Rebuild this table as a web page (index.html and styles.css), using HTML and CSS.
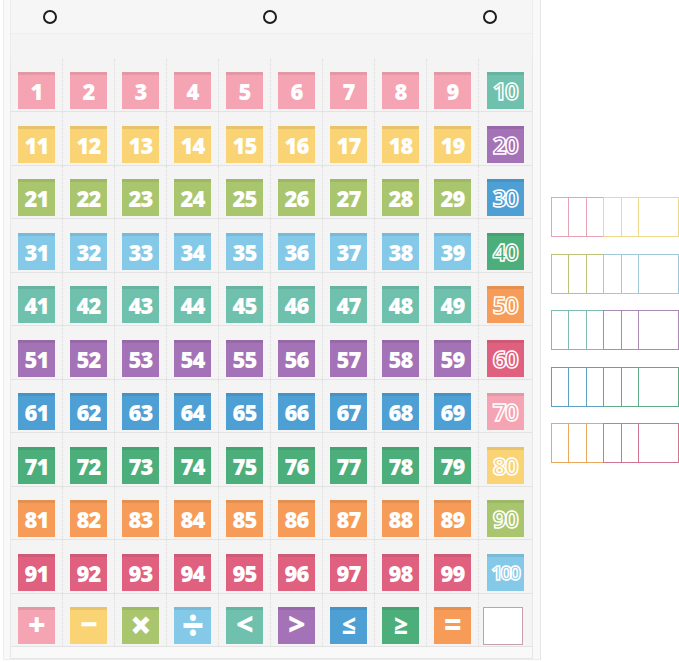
FILE: index.html
```html
<!DOCTYPE html>
<html>
<head>
<meta charset="utf-8">
<link rel="stylesheet" href="styles.css">
</head>
<body>
<div class="page">
  <div class="panel">
    <div class="header">
      <span class="grommet"></span>
      <span class="grommet"></span>
      <span class="grommet"></span>
    </div>
    <div class="grid">
      <div class="row">
        <div class="cell"><span class="card pink">1</span></div>
        <div class="cell"><span class="card pink">2</span></div>
        <div class="cell"><span class="card pink">3</span></div>
        <div class="cell"><span class="card pink">4</span></div>
        <div class="cell"><span class="card pink">5</span></div>
        <div class="cell"><span class="card pink">6</span></div>
        <div class="cell"><span class="card pink">7</span></div>
        <div class="cell"><span class="card pink">8</span></div>
        <div class="cell"><span class="card pink">9</span></div>
        <div class="cell"><span class="card teal outline">10</span></div>
      </div>
      <div class="row">
        <div class="cell"><span class="card yellow">11</span></div>
        <div class="cell"><span class="card yellow">12</span></div>
        <div class="cell"><span class="card yellow">13</span></div>
        <div class="cell"><span class="card yellow">14</span></div>
        <div class="cell"><span class="card yellow">15</span></div>
        <div class="cell"><span class="card yellow">16</span></div>
        <div class="cell"><span class="card yellow">17</span></div>
        <div class="cell"><span class="card yellow">18</span></div>
        <div class="cell"><span class="card yellow">19</span></div>
        <div class="cell"><span class="card purple outline">20</span></div>
      </div>
      <div class="row">
        <div class="cell"><span class="card lime">21</span></div>
        <div class="cell"><span class="card lime">22</span></div>
        <div class="cell"><span class="card lime">23</span></div>
        <div class="cell"><span class="card lime">24</span></div>
        <div class="cell"><span class="card lime">25</span></div>
        <div class="cell"><span class="card lime">26</span></div>
        <div class="cell"><span class="card lime">27</span></div>
        <div class="cell"><span class="card lime">28</span></div>
        <div class="cell"><span class="card lime">29</span></div>
        <div class="cell"><span class="card blue outline">30</span></div>
      </div>
      <div class="row">
        <div class="cell"><span class="card sky">31</span></div>
        <div class="cell"><span class="card sky">32</span></div>
        <div class="cell"><span class="card sky">33</span></div>
        <div class="cell"><span class="card sky">34</span></div>
        <div class="cell"><span class="card sky">35</span></div>
        <div class="cell"><span class="card sky">36</span></div>
        <div class="cell"><span class="card sky">37</span></div>
        <div class="cell"><span class="card sky">38</span></div>
        <div class="cell"><span class="card sky">39</span></div>
        <div class="cell"><span class="card green outline">40</span></div>
      </div>
      <div class="row">
        <div class="cell"><span class="card teal">41</span></div>
        <div class="cell"><span class="card teal">42</span></div>
        <div class="cell"><span class="card teal">43</span></div>
        <div class="cell"><span class="card teal">44</span></div>
        <div class="cell"><span class="card teal">45</span></div>
        <div class="cell"><span class="card teal">46</span></div>
        <div class="cell"><span class="card teal">47</span></div>
        <div class="cell"><span class="card teal">48</span></div>
        <div class="cell"><span class="card teal">49</span></div>
        <div class="cell"><span class="card orange outline">50</span></div>
      </div>
      <div class="row">
        <div class="cell"><span class="card purple">51</span></div>
        <div class="cell"><span class="card purple">52</span></div>
        <div class="cell"><span class="card purple">53</span></div>
        <div class="cell"><span class="card purple">54</span></div>
        <div class="cell"><span class="card purple">55</span></div>
        <div class="cell"><span class="card purple">56</span></div>
        <div class="cell"><span class="card purple">57</span></div>
        <div class="cell"><span class="card purple">58</span></div>
        <div class="cell"><span class="card purple">59</span></div>
        <div class="cell"><span class="card rose outline">60</span></div>
      </div>
      <div class="row">
        <div class="cell"><span class="card blue">61</span></div>
        <div class="cell"><span class="card blue">62</span></div>
        <div class="cell"><span class="card blue">63</span></div>
        <div class="cell"><span class="card blue">64</span></div>
        <div class="cell"><span class="card blue">65</span></div>
        <div class="cell"><span class="card blue">66</span></div>
        <div class="cell"><span class="card blue">67</span></div>
        <div class="cell"><span class="card blue">68</span></div>
        <div class="cell"><span class="card blue">69</span></div>
        <div class="cell"><span class="card pink outline">70</span></div>
      </div>
      <div class="row">
        <div class="cell"><span class="card green">71</span></div>
        <div class="cell"><span class="card green">72</span></div>
        <div class="cell"><span class="card green">73</span></div>
        <div class="cell"><span class="card green">74</span></div>
        <div class="cell"><span class="card green">75</span></div>
        <div class="cell"><span class="card green">76</span></div>
        <div class="cell"><span class="card green">77</span></div>
        <div class="cell"><span class="card green">78</span></div>
        <div class="cell"><span class="card green">79</span></div>
        <div class="cell"><span class="card yellow outline">80</span></div>
      </div>
      <div class="row">
        <div class="cell"><span class="card orange">81</span></div>
        <div class="cell"><span class="card orange">82</span></div>
        <div class="cell"><span class="card orange">83</span></div>
        <div class="cell"><span class="card orange">84</span></div>
        <div class="cell"><span class="card orange">85</span></div>
        <div class="cell"><span class="card orange">86</span></div>
        <div class="cell"><span class="card orange">87</span></div>
        <div class="cell"><span class="card orange">88</span></div>
        <div class="cell"><span class="card orange">89</span></div>
        <div class="cell"><span class="card lime outline">90</span></div>
      </div>
      <div class="row">
        <div class="cell"><span class="card rose">91</span></div>
        <div class="cell"><span class="card rose">92</span></div>
        <div class="cell"><span class="card rose">93</span></div>
        <div class="cell"><span class="card rose">94</span></div>
        <div class="cell"><span class="card rose">95</span></div>
        <div class="cell"><span class="card rose">96</span></div>
        <div class="cell"><span class="card rose">97</span></div>
        <div class="cell"><span class="card rose">98</span></div>
        <div class="cell"><span class="card rose">99</span></div>
        <div class="cell"><span class="card sky outline small">100</span></div>
      </div>
      <div class="row">
        <div class="cell"><span class="card pink sym">+</span></div>
        <div class="cell"><span class="card yellow sym">&minus;</span></div>
        <div class="cell"><span class="card lime sym big">&times;</span></div>
        <div class="cell"><span class="card sky sym big">&divide;</span></div>
        <div class="cell"><span class="card teal sym">&lt;</span></div>
        <div class="cell"><span class="card purple sym">&gt;</span></div>
        <div class="cell"><span class="card blue sym rel">&le;</span></div>
        <div class="cell"><span class="card green sym rel">&ge;</span></div>
        <div class="cell"><span class="card orange sym">=</span></div>
        <div class="cell"><span class="card blank"></span></div>
      </div>
    </div>
    <div class="strip"></div>
  </div>
  <div class="sets">
    <div class="set">
      <span class="slot b-pink"></span><span class="slot b-pink"></span><span class="slot b-pink"></span>
      <span class="slot b-yellow"></span><span class="slot b-yellow"></span><span class="slot wide b-yellow"></span>
    </div>
    <div class="set">
      <span class="slot b-lime"></span><span class="slot b-lime"></span><span class="slot b-lime"></span>
      <span class="slot b-sky"></span><span class="slot b-sky"></span><span class="slot wide b-sky"></span>
    </div>
    <div class="set">
      <span class="slot b-teal"></span><span class="slot b-teal"></span><span class="slot b-teal"></span>
      <span class="slot b-purple"></span><span class="slot b-purple"></span><span class="slot wide b-purple"></span>
    </div>
    <div class="set">
      <span class="slot b-blue"></span><span class="slot b-blue"></span><span class="slot b-blue"></span>
      <span class="slot b-green"></span><span class="slot b-green"></span><span class="slot wide b-green"></span>
    </div>
    <div class="set">
      <span class="slot b-orange"></span><span class="slot b-orange"></span><span class="slot b-orange"></span>
      <span class="slot b-rose"></span><span class="slot b-rose"></span><span class="slot wide b-rose"></span>
    </div>
  </div>
</div>
</body>
</html>
```

FILE: styles.css
```css
html, body {
  margin: 0;
  padding: 0;
  background: #ffffff;
}

.page {
  display: flex;
  align-items: flex-start;
  width: 679px;
  height: 662px;
  overflow: hidden;
  font-family: "Open Sans", Lato, sans-serif;
}

.panel {
  margin-left: 3px;
  width: 533px;
  height: 659px;
  background: #f9f9f9;
  border-left: 1px solid #ececec;
  border-right: 1px solid #e6e6e6;
  border-bottom: 1px solid #ececec;
  padding: 0 7px 0 6px;
  display: flex;
  flex-direction: column;
}

.header {
  height: 59.5px;
  box-sizing: border-box;
  display: flex;
  align-items: flex-start;
  padding: 10px 0 0 32px;
  gap: 206px;
  background: linear-gradient(#f6f6f6 0, #f6f6f6 33px, #eeeeee 33px, #eeeeee 34px, #f4f4f4 34px);
  border-left: 1px solid #ececec;
  border-right: 1px solid #ececec;
}

.grommet {
  width: 14px;
  height: 14px;
  box-sizing: border-box;
  border-radius: 50%;
  border: 2px solid #1e1e1e;
  background: #fafafa;
}

.grid {
  display: flex;
  flex-direction: column;
  background: #f4f4f4;
  border-left: 1px solid #e8e8e8;
  border-right: 1px solid #e8e8e8;
}

.row {
  display: grid;
  grid-template-columns: repeat(10, 52px);
  height: 53.5px;
  box-sizing: border-box;
  border-bottom: 1px solid #e3e3e3;
}

.cell {
  display: flex;
  justify-content: center;
  align-items: flex-start;
  padding-top: 13.5px;
  border-right: 1px dotted #dcdcdc;
}

.cell:last-child {
  border-right: none;
}

.card {
  width: 37px;
  height: 37px;
  display: flex;
  align-items: center;
  justify-content: center;
  color: #ffffff;
  font-weight: 800;
  font-size: 22px;
  letter-spacing: -0.8px;
  box-shadow: inset 0 3px 0 rgba(0, 0, 0, 0.07);
  line-height: 1;
  padding-top: 1px;
  box-sizing: border-box;
}

.card.outline {
  color: transparent;
  -webkit-text-stroke: 1.5px #ffffff;
  font-weight: 700;
  font-size: 24px;
  letter-spacing: -1.5px;
}

.card.small {
  font-size: 20px;
  letter-spacing: -2.2px;
}

.card.sym {
  font-size: 30px;
  font-weight: 800;
  padding-top: 0;
  padding-bottom: 3px;
}

.card.sym.big {
  font-size: 38px;
  padding-bottom: 4px;
}

.card.sym.rel {
  font-size: 24px;
  padding-bottom: 1px;
}

.card.blank {
  background: #ffffff;
  border: 1.5px solid #c8a0ad;
  box-shadow: none;
  width: 40px;
  height: 38px;
  margin-left: -4px;
}

.pink { background: #f5a4b3; }
.yellow { background: #f9d374; }
.lime { background: #a9c66f; }
.sky { background: #84c9e8; }
.teal { background: #6fc1ae; }
.purple { background: #a472b6; }
.blue { background: #4d9fd4; }
.green { background: #4cae7b; }
.orange { background: #f69b58; }
.rose { background: #e0607f; }

.strip {
  height: 11px;
  background: #f9f9f9;
  border: 1px solid #e6e6e6;
  border-top: none;
}

.sets {
  margin-left: 10px;
  padding-top: 197px;
  display: flex;
  flex-direction: column;
  gap: 16.5px;
}

.set {
  display: flex;
  height: 40px;
}

.slot {
  width: 19px;
  height: 40px;
  box-sizing: border-box;
  border: 1.5px solid;
  margin-left: -1.5px;
  background: #ffffff;
}

.slot:first-child {
  margin-left: 0;
}

.slot.wide {
  width: 41px;
}

.b-pink { border-color: #e6a3b6; }
.b-yellow { border-color: #ecd98c; }
.b-lime { border-color: #bcc27a; }
.b-sky { border-color: #9fc9d8; }
.b-teal { border-color: #7fbcb0; }
.b-purple { border-color: #a98ab3; }
.b-blue { border-color: #5f9fc4; }
.b-green { border-color: #5fab86; }
.b-orange { border-color: #e8a85e; }
.b-rose { border-color: #d27590; }
```
